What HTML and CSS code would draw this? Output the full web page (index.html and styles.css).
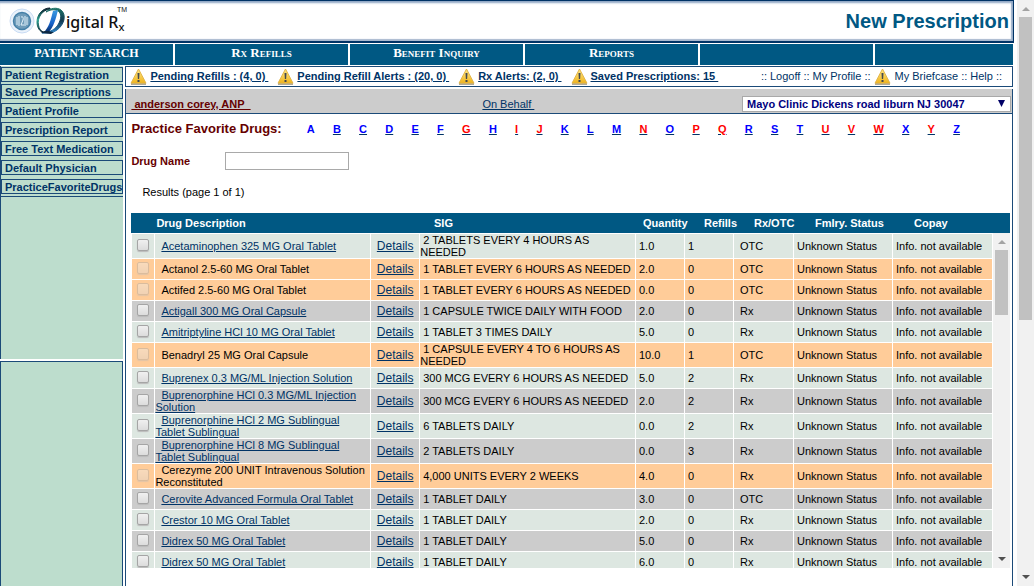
FILE: index.html
```html
<!DOCTYPE html>
<html lang="en">
<head>
<meta charset="utf-8">
<title>Digital Rx - New Prescription</title>
<link rel="stylesheet" href="styles.css">
</head>
<body>
<svg class="defs" width="0" height="0" aria-hidden="true">
  <defs>
    <linearGradient id="gold" x1="0" y1="0" x2="0" y2="1"><stop offset="0" stop-color="#ffe98a"/><stop offset="1" stop-color="#f0b41c"/></linearGradient>
    <symbol id="warn" viewBox="0 0 17 17">
      <path d="M8.5 1 16 15.2H1Z" fill="url(#gold)" stroke="#e3b548" stroke-width="1" stroke-linejoin="round"/>
      <path d="M1 16.2H16" stroke="#8f8468" stroke-width="1"/>
      <path d="M7.5 5h2l-.4 6H7.9z" fill="#43484f"/><rect x="7.5" y="12" width="2" height="2" fill="#43484f"/>
    </symbol>
  </defs>
</svg>
<div class="app">
  <header class="banner">
    <svg class="logo" width="128" height="36" viewBox="0 0 128 36" role="img" aria-label="Digital Rx">
      <defs>
        <linearGradient id="stem" x1="0" y1="0" x2="0" y2="1"><stop offset="0" stop-color="#3b9be0"/><stop offset=".6" stop-color="#1560c8"/><stop offset="1" stop-color="#0a2a5c"/></linearGradient>
        <linearGradient id="arc" x1="0" y1="0" x2="0" y2="1"><stop offset="0" stop-color="#0a1c2c"/><stop offset=".5" stop-color="#2a9f8f"/><stop offset="1" stop-color="#0a2233"/></linearGradient>
        <linearGradient id="bowl" x1="0" y1="0" x2="0" y2="1"><stop offset="0" stop-color="#1d7468"/><stop offset=".5" stop-color="#123a52"/><stop offset="1" stop-color="#2f86c8"/></linearGradient>
      </defs>
      <circle cx="22" cy="18" r="12" fill="#eaf2fb" stroke="#c9dcf4"/>
      <circle cx="22" cy="18" r="8.5" fill="#6f9cba" stroke="#4580a8" stroke-width="1.5"/>
      <path d="M17 14v8M19 13v10M25 13v10M27 14v8M21 14q3-1 2 3l-2 5h3" fill="none" stroke="#e4f2fa"/>
      <path d="M50 6C42 7 37 15 38.500 22C39 26 41 28 44 29.500C40 29 37 25 37 19C37 11 43 5 50 5Z" fill="url(#arc)" stroke="url(#arc)"/>
      <path d="M46 9C50 5 57 4 61 7C67 12 64 22 57 27C53 30 48 30 42 30C51 29 56 26 59 20C62 14 61 9 57 7.500C53 6 50 7 46 9Z" fill="url(#bowl)" stroke="url(#bowl)"/>
      <path d="M53 8L58 7C56 15 54 24 48 30H43C49 25 51 16 53 8Z" fill="url(#stem)"/>
      <path d="M41 30C44 27 48 28 54 29L51 31C47 31 44 30 41 30Z" fill="#0d2944"/>
      <text class="logo-name" x="66" y="25">igital R<tspan class="logo-sub" dy="3">x</tspan><tspan class="logo-tm" x="117" y="9">TM</tspan></text>
    </svg>
    <h1>New Prescription</h1>
  </header>
  <nav class="tabs">
    <a class="tab first" href="#">PATIENT SEARCH</a>
    <a class="tab" href="#">Rx Refills</a>
    <a class="tab" href="#">Benefit Inquiry</a>
    <a class="tab" href="#">Reports</a>
    <span class="tab"></span>
    <span class="tab last"></span>
  </nav>
  <div class="body">
    <aside class="side">
      <nav class="menu">
        <a href="#">Patient Registration</a>
        <a href="#">Saved Prescriptions</a>
        <a href="#">Patient Profile</a>
        <a href="#">Prescription Report</a>
        <a href="#">Free Text Medication</a>
        <a href="#">Default Physician</a>
        <a href="#">PracticeFavoriteDrugs</a>
      </nav>
      <div class="side-fill"></div>
      <div class="side-lower"></div>
    </aside>
    <div class="main">
      <div class="alerts">
        <div class="alert-list">
          <span class="alert"><svg class="warn"><use href="#warn"/></svg><a href="#">Pending Refills : (4, 0)&nbsp;</a></span>
          <span class="alert"><svg class="warn"><use href="#warn"/></svg><a href="#">Pending Refill Alerts : (20, 0)&nbsp;</a></span>
          <span class="alert"><svg class="warn"><use href="#warn"/></svg><a href="#">Rx Alerts: (2, 0)&nbsp;</a></span>
          <span class="alert"><svg class="warn"><use href="#warn"/></svg><a href="#">Saved Prescriptions: 15&nbsp;</a></span>
        </div>
        <div class="links"><span>::</span><a href="#">Logoff</a><span>::</span><a href="#">My Profile</a><span>::</span><svg class="warn"><use href="#warn"/></svg><a href="#">My Briefcase</a><span>::</span><a href="#">Help</a><span>::</span></div>
      </div>
      <div class="panel">
        <div class="context">
          <a class="user" href="#">&nbsp;anderson corey, ANP&nbsp;&nbsp;</a>
          <a class="behalf" href="#">On Behalf&nbsp;</a>
          <div class="site">
            <select aria-label="Practice location"><option>Mayo Clinic Dickens road liburn NJ 30047</option></select>
            <svg class="caret" viewBox="0 0 7 7" aria-hidden="true"><path d="M0 0h7L3.500 7z" fill="#000066"/></svg>
          </div>
        </div>
        <div class="content">
          <div class="index">
            <h2>Practice Favorite Drugs:</h2>
            <div class="letters"><span>A</span><a href="#">B</a><a href="#">C</a><a href="#">D</a><a href="#">E</a><a href="#">F</a><a class="red" href="#">G</a><a href="#">H</a><a class="red" href="#">I</a><a class="red" href="#">J</a><a href="#">K</a><a href="#">L</a><a href="#">M</a><a class="red" href="#">N</a><a href="#">O</a><a class="red" href="#">P</a><a class="red" href="#">Q</a><a href="#">R</a><a href="#">S</a><a href="#">T</a><a class="red" href="#">U</a><a class="red" href="#">V</a><a class="red" href="#">W</a><a href="#">X</a><a class="red" href="#">Y</a><a href="#">Z</a></div>
          </div>
          <div class="search"><label for="drug">Drug Name</label><input id="drug" type="text"></div>
          <p class="results">Results (page 1 of 1)</p>
          <table class="head">
            <colgroup><col class="h-check"><col><col class="h-sig"><col class="h-qty"><col class="h-ref"><col class="h-otc"><col class="h-status"><col class="h-copay"></colgroup>
            <thead><tr><th></th><th>Drug Description</th><th>SIG</th><th>Quantity</th><th>Refills</th><th>Rx/OTC</th><th>Fmlry. Status</th><th>Copay</th></tr></thead>
          </table>
          <div class="scroller">
            <div class="rows">
              <table class="drugs">
                <colgroup><col class="c-check"><col><col class="c-det"><col><col class="c-num"><col class="c-num"><col class="c-otc"><col class="c-status"><col class="c-copay"></colgroup>
                <tbody>
                <tr class="mint"><td><input type="checkbox" aria-label="Acetaminophen 325 MG"></td><td><a href="#">Acetaminophen 325 MG Oral Tablet</a></td><td><a href="#">Details</a></td><td>2 TABLETS EVERY 4 HOURS AS NEEDED</td><td>1.0</td><td>1</td><td>OTC</td><td>Unknown Status</td><td>Info. not available</td></tr>
                <tr class="off"><td><input type="checkbox" disabled aria-label="Actanol"></td><td>Actanol 2.5-60 MG Oral Tablet</td><td><a href="#">Details</a></td><td>1 TABLET EVERY 6 HOURS AS NEEDED</td><td>2.0</td><td>0</td><td>OTC</td><td>Unknown Status</td><td>Info. not available</td></tr>
                <tr class="off"><td><input type="checkbox" disabled aria-label="Actifed"></td><td>Actifed 2.5-60 MG Oral Tablet</td><td><a href="#">Details</a></td><td>1 TABLET EVERY 6 HOURS AS NEEDED</td><td>0.0</td><td>0</td><td>OTC</td><td>Unknown Status</td><td>Info. not available</td></tr>
                <tr class="gray"><td><input type="checkbox" aria-label="Actigall 300 MG"></td><td><a href="#">Actigall 300 MG Oral Capsule</a></td><td><a href="#">Details</a></td><td>1 CAPSULE TWICE DAILY WITH FOOD</td><td>2.0</td><td>0</td><td>Rx</td><td>Unknown Status</td><td>Info. not available</td></tr>
                <tr class="mint"><td><input type="checkbox" aria-label="Amitriptyline HCl 10 MG"></td><td><a href="#">Amitriptyline HCl 10 MG Oral Tablet</a></td><td><a href="#">Details</a></td><td>1 TABLET 3 TIMES DAILY</td><td>5.0</td><td>0</td><td>Rx</td><td>Unknown Status</td><td>Info. not available</td></tr>
                <tr class="off"><td><input type="checkbox" disabled aria-label="Benadryl"></td><td>Benadryl 25 MG Oral Capsule</td><td><a href="#">Details</a></td><td>1 CAPSULE EVERY 4 TO 6 HOURS AS NEEDED</td><td>10.0</td><td>1</td><td>OTC</td><td>Unknown Status</td><td>Info. not available</td></tr>
                <tr class="mint"><td><input type="checkbox" aria-label="Buprenex 0.3 MG/ML"></td><td><a href="#">Buprenex 0.3 MG/ML Injection Solution</a></td><td><a href="#">Details</a></td><td>300 MCG EVERY 6 HOURS AS NEEDED</td><td>5.0</td><td>2</td><td>Rx</td><td>Unknown Status</td><td>Info. not available</td></tr>
                <tr class="gray"><td><input type="checkbox" aria-label="Buprenorphine HCl 0.3 MG/ML"></td><td><a href="#">Buprenorphine HCl 0.3 MG/ML Injection Solution</a></td><td><a href="#">Details</a></td><td>300 MCG EVERY 6 HOURS AS NEEDED</td><td>2.0</td><td>2</td><td>Rx</td><td>Unknown Status</td><td>Info. not available</td></tr>
                <tr class="mint"><td><input type="checkbox" aria-label="Buprenorphine HCl 2 MG"></td><td><a href="#">Buprenorphine HCl 2 MG Sublingual Tablet Sublingual</a></td><td><a href="#">Details</a></td><td>6 TABLETS DAILY</td><td>0.0</td><td>2</td><td>Rx</td><td>Unknown Status</td><td>Info. not available</td></tr>
                <tr class="gray"><td><input type="checkbox" aria-label="Buprenorphine HCl 8 MG"></td><td><a href="#">Buprenorphine HCl 8 MG Sublingual Tablet Sublingual</a></td><td><a href="#">Details</a></td><td>2 TABLETS DAILY</td><td>0.0</td><td>3</td><td>Rx</td><td>Unknown Status</td><td>Info. not available</td></tr>
                <tr class="off"><td><input type="checkbox" disabled aria-label="Cerezyme"></td><td>Cerezyme 200 UNIT Intravenous Solution Reconstituted</td><td><a href="#">Details</a></td><td>4,000 UNITS EVERY 2 WEEKS</td><td>4.0</td><td>0</td><td>Rx</td><td>Unknown Status</td><td>Info. not available</td></tr>
                <tr class="gray"><td><input type="checkbox" aria-label="Cerovite Advanced Formula"></td><td><a href="#">Cerovite Advanced Formula Oral Tablet</a></td><td><a href="#">Details</a></td><td>1 TABLET DAILY</td><td>3.0</td><td>0</td><td>OTC</td><td>Unknown Status</td><td>Info. not available</td></tr>
                <tr class="mint"><td><input type="checkbox" aria-label="Crestor 10 MG"></td><td><a href="#">Crestor 10 MG Oral Tablet</a></td><td><a href="#">Details</a></td><td>1 TABLET DAILY</td><td>2.0</td><td>0</td><td>Rx</td><td>Unknown Status</td><td>Info. not available</td></tr>
                <tr class="gray"><td><input type="checkbox" aria-label="Didrex 50 MG"></td><td><a href="#">Didrex 50 MG Oral Tablet</a></td><td><a href="#">Details</a></td><td>1 TABLET DAILY</td><td>5.0</td><td>0</td><td>Rx</td><td>Unknown Status</td><td>Info. not available</td></tr>
                <tr class="mint"><td><input type="checkbox" aria-label="Didrex 50 MG, second entry"></td><td><a href="#">Didrex 50 MG Oral Tablet</a></td><td><a href="#">Details</a></td><td>1 TABLET DAILY</td><td>6.0</td><td>0</td><td>Rx</td><td>Unknown Status</td><td>Info. not available</td></tr>
                </tbody>
              </table>
            </div>
            <div class="bar"><span class="up"></span><span class="thumb"></span><span class="down"></span></div>
          </div>
        </div>
      </div>
    </div>
  </div>
</div>
<div class="bar page-bar"><span class="up"></span><span class="thumb"></span><span class="down"></span></div>
</body>
</html>
```
FILE: styles.css
```css
* { box-sizing: border-box; }

:root {
  --navy: #003366;
  --blue: #005883;
  --mint: #bdddcd;
  --line: #1b4a78;
}

body {
  margin: 0;
  height: 100vh;
  display: flex;
  gap: 3px;
  overflow: hidden;
  background: #fff;
  color: #000;
  font: 11px/12px "Liberation Sans", Arial, sans-serif;
}

a { color: var(--navy); }
.defs { position: absolute; }

.app {
  flex: 1;
  min-width: 0;
  display: flex;
  flex-direction: column;
}

/* Banner */
.banner {
  display: flex;
  justify-content: space-between;
  align-items: center;
  height: 43px;
  padding-right: 4px;
  border: solid var(--navy);
  border-width: 1px 1px 2px 0;
  box-shadow: inset -1px 2px 2px #8fa6c4, inset -2px -2px 1px #a9b9cf;
}
.logo-name { font: 500 16px "Noto Sans", sans-serif; fill: #111; }
.logo-sub { font-size: 11px; }
.logo-tm { font: 7px "Liberation Sans", sans-serif; }
h1 {
  margin: 0;
  color: var(--blue);
  font-size: 20px;
  line-height: 24px;
}

/* Top tabs */
.tabs {
  display: flex;
  gap: 2px;
  padding: 1px 1px 1px 0;
}
.tab {
  flex: 0 0 173px;
  height: 21px;
  background: var(--blue);
  color: #fff;
  font: bold 13px/18px "Liberation Serif", "Times New Roman", serif;
  font-variant: small-caps;
  text-align: center;
  text-decoration: none;
}
.tab.first { font-size: 12px; font-variant: normal; }
.tab.last { flex: 1; }

.body {
  flex: 1;
  min-height: 0;
  display: flex;
  gap: 2px;
  padding-right: 1px;
}

/* Sidebar */
.side {
  flex: 0 0 123px;
  display: flex;
  flex-direction: column;
}
.menu {
  display: flex;
  flex-direction: column;
  gap: 4px;
  padding: 1px 0 2px;
  border: solid var(--line);
  border-width: 0 0 1px 1px;
  background: var(--mint);
}
.menu a {
  height: 15px;
  padding-left: 3px;
  border: 1px solid var(--line);
  font-weight: bold;
  line-height: 14px;
  text-decoration: none;
  white-space: nowrap;
}
.menu a:first-child { margin-bottom: -2px; }
.side-fill {
  flex: 0 0 162px;
  border-left: 1px solid var(--line);
  background: var(--mint);
}
.side-lower {
  flex: 1;
  margin-top: 2px;
  border: solid var(--line);
  border-width: 1px 1px 0 1px;
  background: var(--mint);
}

/* Alert bar */
.main {
  flex: 1;
  min-width: 0;
  display: flex;
  flex-direction: column;
  gap: 2px;
}
.alerts {
  display: flex;
  justify-content: space-between;
  height: 21px;
  padding: 0 10px 0 4px;
  border: 1px solid var(--line);
  line-height: 18px;
  white-space: nowrap;
}
.alert-list { display: flex; gap: 9px; }
.alert { display: flex; gap: 3px; font-weight: bold; }
.warn { width: 17px; height: 17px; margin-top: 1px; }
.links { display: flex; gap: 3px; color: var(--navy); }
.links .warn { margin-right: 1px; }
.links a { text-decoration: none; }

/* Context strip */
.panel {
  flex: 1;
  border: solid var(--line);
  border-width: 0 1px;
}
.context {
  display: grid;
  grid-template-columns: 351px 1fr 270px;
  align-items: end;
  height: 25px;
  padding-left: 5px;
  border-bottom: 1px solid var(--line);
  background: #ccc;
  font-weight: bold;
}
.context a { justify-self: start; padding-bottom: 3px; }
.context .user { color: #660000; }
.context .behalf { font-weight: normal; }
.site { position: relative; padding: 0 1px 1px 0; }
.site select {
  display: block;
  width: 100%;
  height: 16px;
  padding: 0 4px;
  border: 1px solid #a9a9a9;
  border-radius: 0;
  appearance: none;
  background: #fff;
  color: #000080;
  font: bold 11px/14px "Liberation Sans", Arial, sans-serif;
}
.caret { position: absolute; top: 4px; right: 7px; width: 7px; height: 7px; }

/* Content */
.content { padding: 7px 2px 0 5px; }
.index { display: flex; align-items: center; gap: 25px; }
h2 {
  flex: 0 0 149px;
  margin: 0;
  color: #660000;
  font-size: 13px;
  line-height: 16px;
  white-space: nowrap;
}
.letters {
  flex: 1;
  display: flex;
  justify-content: space-between;
  margin-right: 50px;
  color: #0000ff;
  font-weight: bold;
}
.letters a { color: #0000ff; text-decoration-color: var(--navy); }
.letters .red { color: #ff0000; }
.search {
  display: flex;
  align-items: center;
  padding-top: 15px;
  color: #660000;
  font-weight: bold;
}
.search label { flex: 0 0 94px; }
.search input {
  width: 124px;
  height: 18px;
  border: 1px solid #a9a9a9;
  font: 11px "Liberation Sans", Arial, sans-serif;
}
.results { margin: 0; padding: 16px 11px 15px; }

table { width: 100%; table-layout: fixed; }
.head { border-collapse: collapse; background: var(--blue); color: #fff; }
.head th { height: 20px; padding: 0; text-align: left; white-space: nowrap; }
.h-check { width: 25px; }
.h-sig { width: 209px; }
.h-qty { width: 61px; }
.h-ref { width: 50px; }
.h-otc { width: 61px; }
.h-status { width: 99px; }
.h-copay { width: 96px; }

.scroller { display: flex; max-height: 335px; overflow: hidden; }
.rows { flex: 1; min-width: 0; }
.drugs { border-spacing: 1px; }
.drugs td { height: 20px; padding: 0; text-indent: 3px; }
.drugs td:first-child { text-indent: 0; text-align: center; }
.drugs td:nth-child(2), .drugs td:nth-child(7) { text-indent: 6px; }
.drugs td:nth-child(3) { text-indent: 0; text-align: center; font-size: 12px; }
.c-check { width: 22px; }
.c-det { width: 48px; }
.c-num { width: 48px; }
.c-otc { width: 59px; }
.c-status { width: 98px; }
.c-copay { width: 99px; }
.mint td { background: #dde7e1; }
.gray td { background: #ccc; }
.off td { background: #ffcc99; }
.drugs input {
  display: block;
  width: 12px;
  height: 12px;
  margin: 0 auto 2px;
  border: 1px solid #a5a5a5;
  border-radius: 2px;
  appearance: none;
  background: linear-gradient(#f0f0f0, #dcdcdc);
  box-shadow: 0 1px 1px #bbb;
}
.drugs input:disabled { opacity: .4; }

/* Scroll bars */
.bar {
  flex: 0 0 17px;
  display: flex;
  flex-direction: column;
  align-items: center;
  background: #f1f1f1;
}
.bar span { flex: none; }
.up, .down { border: 4px solid transparent; border-top: 0; }
.up { margin: 7px 0 6px; border-bottom-color: #a3a3a3; }
.down { margin: auto 0 7px; border-top: 4px solid #505050; border-bottom: 0; }
.thumb { width: 13px; height: 65px; background: #c1c1c1; }
.page-bar .up { margin-bottom: 6px; }
.page-bar .thumb { height: 303px; }
```
